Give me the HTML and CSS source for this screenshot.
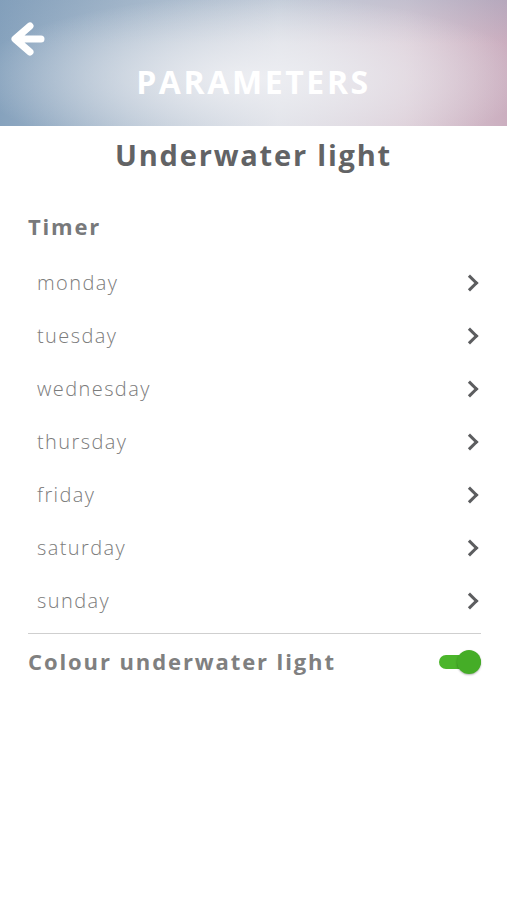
FILE: index.html
```html
<!DOCTYPE html>
<html lang="en">
<head>
  <meta charset="UTF-8">
  <title>Parameters</title>
  <link rel="stylesheet" href="styles.css">
</head>
<body>
  <div class="header">
    <button class="back">
      <svg width="34" height="34" viewBox="0 0 34 34">
        <path d="M19 4 L4 17 L19 30 M5 17 H30" fill="none" stroke="#fff" stroke-width="7" stroke-linecap="round" stroke-linejoin="round"/>
      </svg>
    </button>
    <h1>PARAMETERS</h1>
  </div>

  <h2 class="title">Underwater light</h2>

  <div class="section">
    <h3>Timer</h3>
    <ul class="days">
      <li>monday <span class="chev"></span></li>
      <li>tuesday <span class="chev"></span></li>
      <li>wednesday <span class="chev"></span></li>
      <li>thursday <span class="chev"></span></li>
      <li>friday <span class="chev"></span></li>
      <li>saturday <span class="chev"></span></li>
      <li>sunday <span class="chev"></span></li>
    </ul>
    <div class="toggle-row">
      <span>Colour underwater light</span>
      <div class="toggle on"><div class="knob"></div></div>
    </div>
  </div>
</body>
</html>
```

FILE: styles.css
```css
body {
  margin: 0;
  font-family: "Open Sans", Lato, sans-serif;
  background: #fff;
  color: #7a7a7a;
}
.header {
  height: 126px;
  position: relative;
  background:
    radial-gradient(ellipse 55% 65% at 50% 62%, rgba(238,239,243,0.95), rgba(238,239,243,0) 100%),
    linear-gradient(180deg, rgba(120,150,180,0.25) 0%, rgba(255,255,255,0) 35%),
    linear-gradient(90deg, #86a2bd 0%, #b3c2d2 28%, #dcdee5 55%, #dccdd7 80%, #cbaebf 100%);
}
.back {
  position: absolute;
  left: 11px;
  top: 22px;
  background: none;
  border: 0;
  padding: 0;
}
.header h1 {
  margin: 0;
  padding-top: 62px;
  text-align: center;
  color: #fff;
  font-size: 32px;
  font-weight: 700;
  letter-spacing: 2.6px;
  line-height: 40px;
}
.title {
  margin: 0;
  padding-top: 7px;
  text-align: center;
  color: #626365;
  font-size: 29px;
  font-weight: 700;
  line-height: 44px;
  letter-spacing: 1.8px;
}
.section {
  padding: 0 26px 0 28px;
}
.section h3 {
  margin: 0;
  padding-top: 33px;
  font-size: 22px;
  font-weight: 700;
  color: #78797b;
  line-height: 32px;
  letter-spacing: 1.8px;
}
.days {
  list-style: none;
  margin: 0;
  padding: 14px 0 0;
}
.days li {
  height: 53px;
  display: flex;
  align-items: center;
  justify-content: space-between;
  padding-left: 9px;
  font-size: 20px;
  font-weight: 300;
  letter-spacing: 1.4px;
  color: #7b7b7b;
}
.chev {
  width: 9px;
  height: 9px;
  border-right: 3.5px solid #5c5d5f;
  border-top: 3.5px solid #5c5d5f;
  transform: rotate(45deg);
  margin-right: 5px;
}
.toggle-row {
  border-top: 1px solid #cfcfcf;
  margin-top: 6px;
  height: 54px;
  display: flex;
  align-items: center;
  justify-content: space-between;
  font-size: 22px;
  font-weight: 700;
  color: #808080;
  letter-spacing: 1.9px;
}
.toggle {
  width: 42px;
  height: 14px;
  border-radius: 7px;
  background: #4bb52b;
  position: relative;
  margin-top: 2px;
}
.toggle .knob {
  position: absolute;
  right: 0;
  top: -5px;
  width: 24px;
  height: 24px;
  border-radius: 50%;
  background: #45ad27;
  box-shadow: 0 1px 2px rgba(0,0,0,0.3);
}
```
